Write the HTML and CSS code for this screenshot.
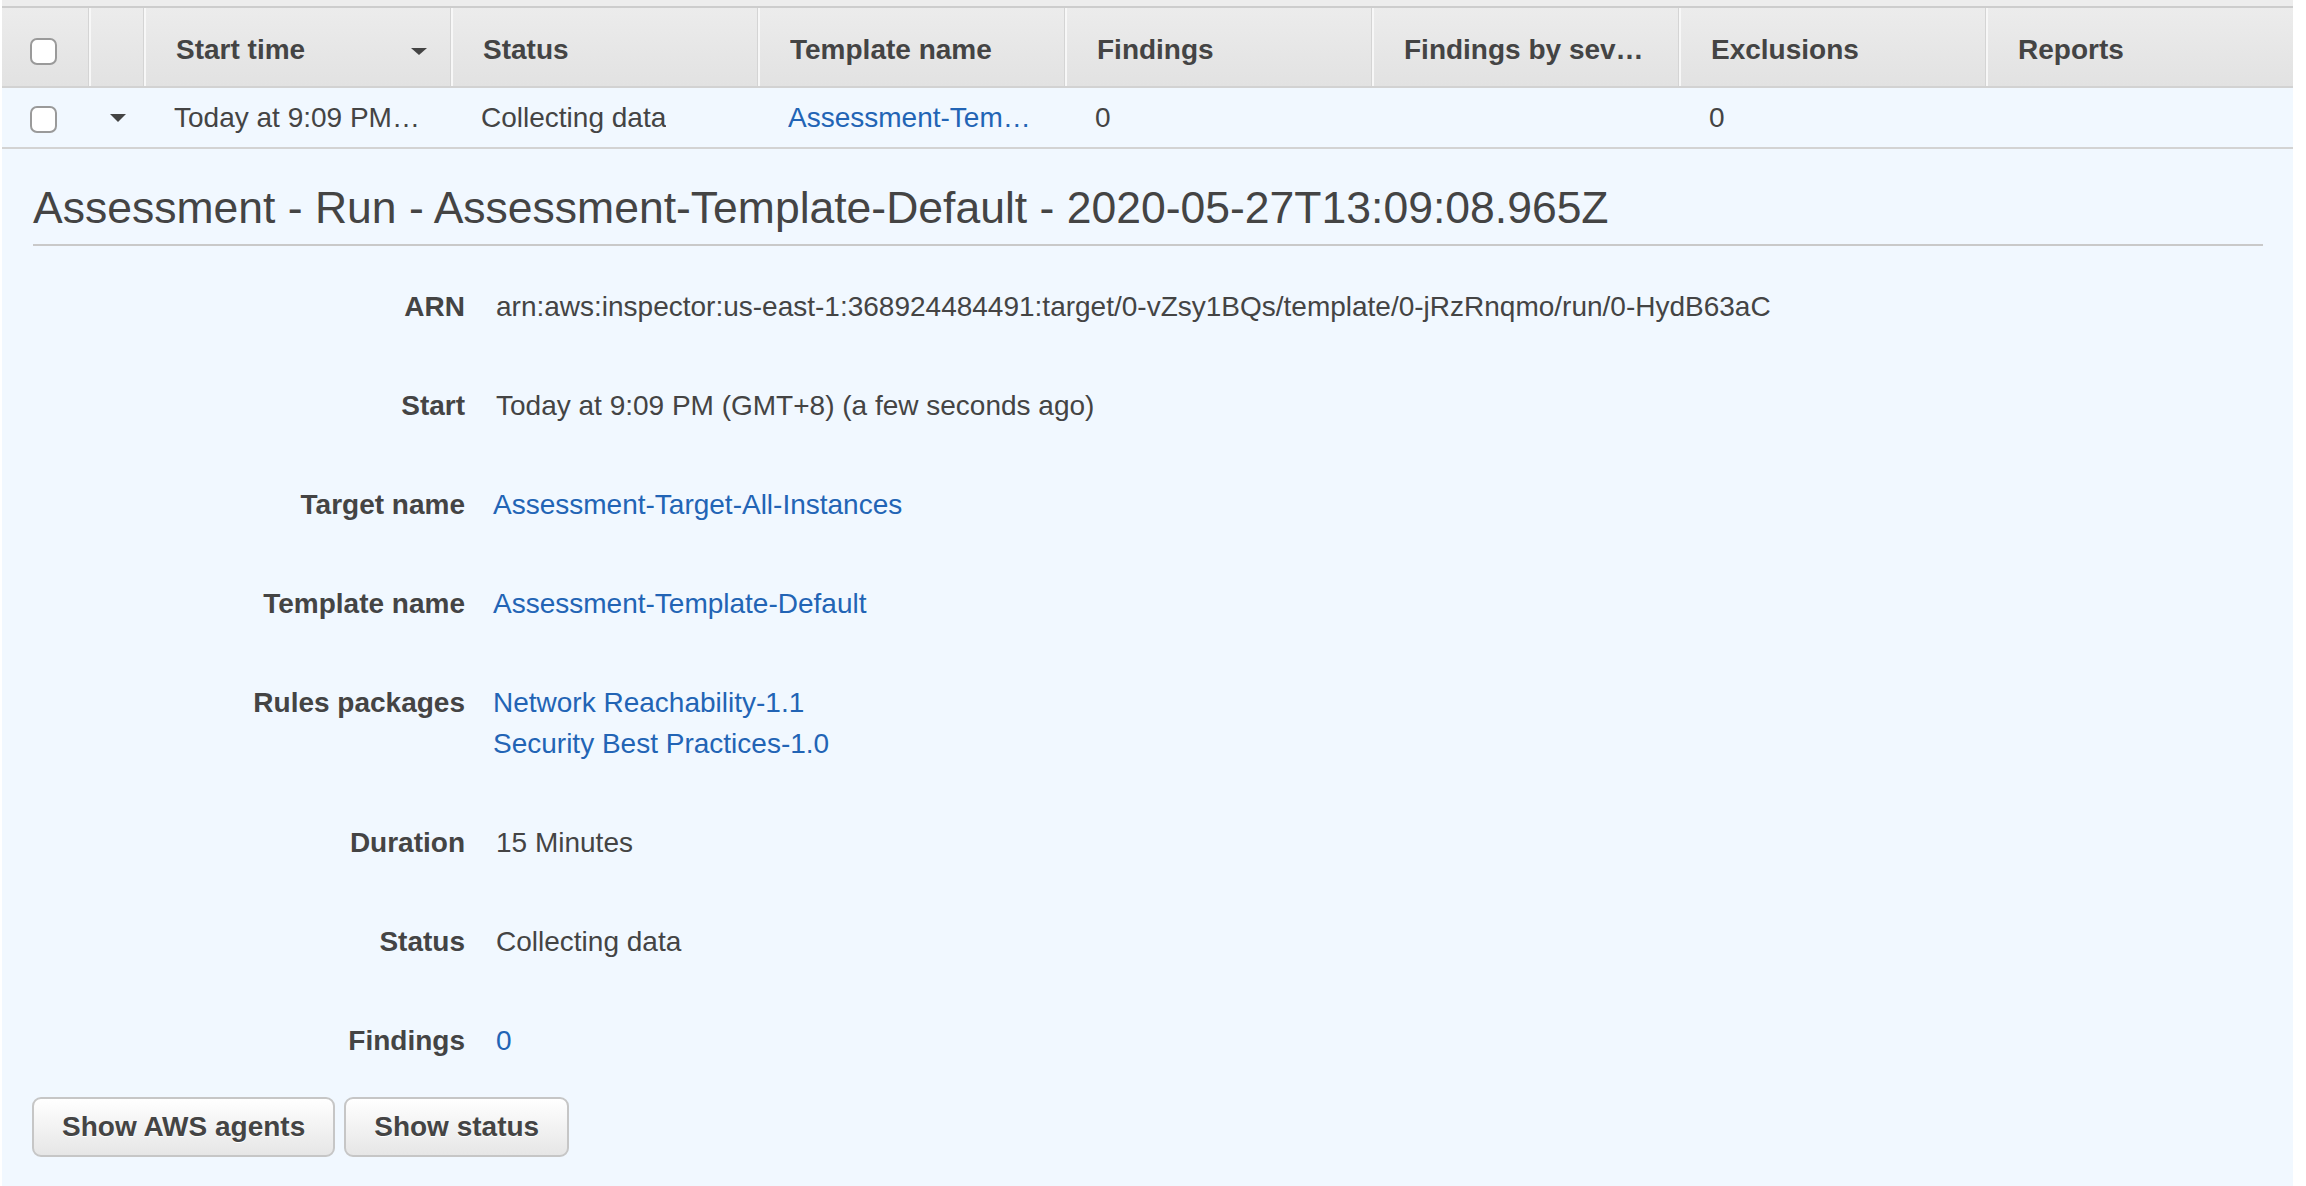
FILE: index.html
```html
<!DOCTYPE html>
<html lang="en">
<head>
<meta charset="utf-8">
<title>Assessment runs</title>
<link rel="stylesheet" href="styles.css">
</head>
<body>
<div class="page">
  <div class="topstrip"></div>
  <div class="thead">
    <div class="th th-check"><span class="checkbox"></span></div>
    <div class="th th-expand"></div>
    <div class="th th-sort"><span class="th-label">Start time</span><span class="sort-caret"></span></div>
    <div class="th"><span class="th-label">Status</span></div>
    <div class="th"><span class="th-label">Template name</span></div>
    <div class="th"><span class="th-label">Findings</span></div>
    <div class="th"><span class="th-label" title="Findings by severity">Findings by sev…</span></div>
    <div class="th"><span class="th-label">Exclusions</span></div>
    <div class="th"><span class="th-label">Reports</span></div>
  </div>
  <div class="trow">
    <div class="td td-check"><span class="checkbox"></span></div>
    <div class="td td-expand"><span class="expand-caret"></span></div>
    <div class="td"><span class="cell-text" title="Today at 9:09 PM (GMT+8) (a few seconds ago)">Today at 9:09 PM…</span></div>
    <div class="td"><span class="cell-text">Collecting data</span></div>
    <div class="td"><a class="link cell-text" href="#" title="Assessment-Template-Default">Assessment-Tem…</a></div>
    <div class="td"><span class="cell-text">0</span></div>
    <div class="td"></div>
    <div class="td"><span class="cell-text">0</span></div>
    <div class="td"></div>
  </div>
  <section class="detail">
    <h2 class="detail-title">Assessment - Run - Assessment-Template-Default - 2020-05-27T13:09:08.965Z</h2>
    <dl class="props">
      <dt>ARN</dt>
      <dd>arn:aws:inspector:us-east-1:368924484491:target/0-vZsy1BQs/template/0-jRzRnqmo/run/0-HydB63aC</dd>
      <dt>Start</dt>
      <dd>Today at 9:09 PM (GMT+8) (a few seconds ago)</dd>
      <dt>Target name</dt>
      <dd><a class="link shift" href="#">Assessment-Target-All-Instances</a></dd>
      <dt>Template name</dt>
      <dd><a class="link shift" href="#">Assessment-Template-Default</a></dd>
      <dt>Rules packages</dt>
      <dd class="stack"><a class="link shift" href="#">Network Reachability-1.1</a><a class="link shift" href="#">Security Best Practices-1.0</a></dd>
      <dt>Duration</dt>
      <dd>15 Minutes</dd>
      <dt>Status</dt>
      <dd>Collecting data</dd>
      <dt>Findings</dt>
      <dd><a class="link" href="#">0</a></dd>
    </dl>
    <div class="actions">
      <button class="btn" type="button">Show AWS agents</button>
      <button class="btn" type="button">Show status</button>
    </div>
  </section>
</div>
</body>
</html>
```

FILE: styles.css
```css
html, body {
  margin: 0;
  padding: 0;
  background: #ffffff;
}

body {
  font-family: "Liberation Sans", Arial, Helvetica, sans-serif;
  color: #444444;
  font-size: 28px;
}

.page {
  width: 2291px;
  margin-left: 2px;
  overflow: hidden;
  height: 1186px;
  display: flex;
  flex-direction: column;
}

.topstrip {
  height: 6px;
  background: #ededed;
}

.thead {
  display: grid;
  grid-template-columns: 87px 55px repeat(7, 1fr);
  height: 78px;
  border-top: 2px solid #cdcdcd;
  border-bottom: 2px solid #d2d2d2;
  background: linear-gradient(#ececec, #e2e2e2);
}

.th {
  display: flex;
  align-items: center;
  min-width: 0;
  padding: 5px 30px 0 30px;
  font-weight: bold;
  border-left: 2px solid #f7f7f7;
  box-shadow: -1px 0 0 #d4d4d4;
}

.th-check {
  border-left: none;
  box-shadow: none;
  padding: 9px 0 0 28px;
}

.th-expand {
  padding: 0;
}

.th-sort {
  padding-right: 24px;
  justify-content: space-between;
}

.th-label {
  overflow: hidden;
  white-space: nowrap;
  min-width: 0;
}

.sort-caret {
  flex: none;
  width: 0;
  height: 0;
  border-left: 8.5px solid transparent;
  border-right: 8.5px solid transparent;
  border-top: 7px solid #444444;
  margin-top: 4px;
}

.trow {
  display: grid;
  grid-template-columns: 87px 55px repeat(7, 1fr);
  height: 59px;
  border-bottom: 2px solid #d3d3d3;
  background: #f1f8ff;
}

.td {
  display: flex;
  align-items: center;
  min-width: 0;
  padding: 0 24px 0 30px;
}

.td-check {
  padding: 4px 0 0 28px;
}

.td-expand {
  padding: 0;
  justify-content: center;
}

.expand-caret {
  width: 0;
  height: 0;
  border-left: 8.5px solid transparent;
  border-right: 8.5px solid transparent;
  border-top: 8px solid #444444;
  margin-left: 3px;
}

.cell-text {
  overflow: hidden;
  white-space: nowrap;
  min-width: 0;
}

.checkbox {
  display: block;
  width: 23px;
  height: 23px;
  border: 2px solid #9a9a9a;
  border-radius: 7px;
  background: #ffffff;
}

.link {
  color: #2264b5;
  text-decoration: none;
}

.detail {
  flex: 1;
  background: #f1f8ff;
  padding: 33px 30px 0 30px;
}

.detail-title {
  margin: 0;
  font-size: 44.5px;
  font-weight: normal;
  line-height: 51px;
  color: #444444;
  padding-bottom: 11px;
  border-bottom: 2px solid #c9c9c9;
  margin-left: 1px;
  white-space: nowrap;
}

.props {
  display: grid;
  grid-template-columns: 433px 1fr;
  column-gap: 31px;
  row-gap: 58px;
  align-items: start;
  margin: 40px 0 0 0;
  line-height: 41px;
}

.props dt {
  font-weight: bold;
  text-align: right;
}

.props dd {
  margin: 0;
  white-space: nowrap;
}

.stack {
  display: flex;
  flex-direction: column;
  align-items: flex-start;
}

.shift {
  margin-left: -3px;
}

.actions {
  display: flex;
  gap: 9px;
  margin-top: 36px;
  margin-left: 0;
}

.btn {
  height: 60px;
  padding: 0 28px;
  font-family: "Liberation Sans", Arial, Helvetica, sans-serif;
  font-size: 28px;
  font-weight: bold;
  color: #444444;
  background: linear-gradient(#ffffff, #e6e6e6);
  border: 2px solid #c6c6c6;
  border-radius: 9px;
  text-shadow: 0 1px 0 #ffffff;
  cursor: pointer;
}
```
